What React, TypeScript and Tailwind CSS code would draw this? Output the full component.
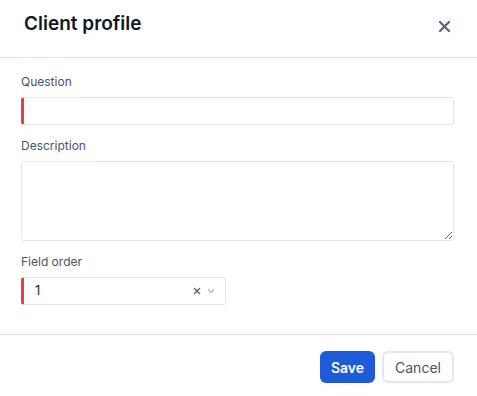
import { HiXMark, HiChevronDown } from "react-icons/hi2";

const Field = ({ label, children }: { label: string; children: React.ReactNode }) => (
  <div className="flex flex-col">
    <label className="text-[12px] leading-4 text-[#4b5563] mb-[7px]">{label}</label>
    {children}
  </div>
);

const App = () => {
  return (
    <div className="w-[477px] h-[396px] bg-white font-['Inter',sans-serif]">
      <div className="h-[58px] border-b border-[#e5e7eb] flex items-start justify-between pl-6 pr-[26px] pt-[12px]">
        <h2 className="text-[19px] leading-6 font-semibold text-[#111827]">Client profile</h2>
        <button className="mt-[8px] text-[#56657f]" title="Close">
          <svg width="13" height="13" viewBox="0 0 13 13" fill="none" stroke="currentColor" strokeWidth="2.2" strokeLinecap="round">
            <path d="M2 2L11 11M11 2L2 11" />
          </svg>
        </button>
      </div>

      <div className="flex flex-col gap-[13px] pl-[21px] pr-[23px] pt-4 pb-[29px] border-b border-[#e5e7eb]">
        <Field label="Question">
          <input className="h-[28px] w-full border border-[#e5e7eb] border-l-[3px] border-l-[#ef3b3b] rounded-[3px] px-3 text-[13px] outline-none" />
        </Field>
        <Field label="Description">
          <textarea className="h-[80px] w-full border border-[#e5e7eb] rounded-[3px] px-3 py-2 text-[13px] outline-none" />
        </Field>
        <Field label="Field order">
          <div className="h-[28px] w-[205px] border border-[#e5e7eb] border-l-[3px] border-l-[#ef3b3b] rounded-[3px] flex items-center pl-[11px] pr-[10px]">
            <span className="flex-1 text-[13px] text-[#1f2937]">1</span>
            <HiXMark className="text-[#4b5a73] mr-[5px]" size={10} strokeWidth={2.4} />
            <HiChevronDown className="text-[#9ca3af]" size={8} strokeWidth={1.8} />
          </div>
        </Field>
      </div>

      <div className="flex justify-end gap-[7px] pt-4 pr-[23px]">
        <button className="h-[32px] w-[55px] rounded-[6px] bg-[#1d5bd8] text-white text-[14px] font-semibold">
          Save
        </button>
        <button className="h-[32px] w-[72px] rounded-[6px] border-2 border-[#e2e8f0] bg-white text-[#4b5563] text-[14px]">
          Cancel
        </button>
      </div>
    </div>
  );
};

export default App;
